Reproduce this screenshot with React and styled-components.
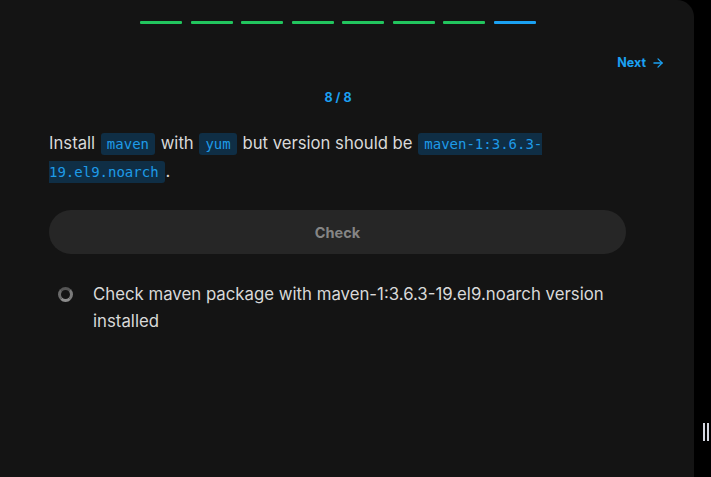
import React from "react"
import styled, { createGlobalStyle } from "styled-components"

const GlobalStyle = createGlobalStyle`
  html, body {
    margin: 0;
    padding: 0;
    background: #000;
    height: 100%;
  }
  body {
    font-family: Inter, "Noto Sans", sans-serif;
    -webkit-font-smoothing: antialiased;
  }
`

const steps = ["done", "done", "done", "done", "done", "done", "done", "current"]

const ArrowRight = () => (
  <svg width="14" height="14" viewBox="0 0 24 24" fill="none" stroke="currentColor" strokeWidth="2.2" strokeLinecap="round" strokeLinejoin="round">
    <path d="M5 12h14" />
    <path d="m12 5 7 7-7 7" />
  </svg>
)

const App = () => {
  return (
    <>
      <GlobalStyle />
      <Page>
        <Panel>
          <Progress>
            {steps.map((s, i) => (
              <Segment key={i} $state={s} />
            ))}
          </Progress>
          <NavRow>
            <NextButton>
              Next <ArrowRight />
            </NextButton>
          </NavRow>
          <Counter>8 / 8</Counter>
          <Content>
            <Task>
              Install <Code>maven</Code> with <Code>yum</Code> but version should be{" "}
              <Code>maven-1:3.6.3-19.el9.noarch</Code>.
            </Task>
            <CheckButton>Check</CheckButton>
            <CheckList>
              <CheckItem>
                <Spinner />
                <span>Check maven package with maven-1:3.6.3-19.el9.noarch version installed</span>
              </CheckItem>
            </CheckList>
          </Content>
        </Panel>
        <Handle />
      </Page>
    </>
  )
}

const Page = styled.div`
  display: flex;
  width: 711px;
  height: 477px;
  background: #000;
  overflow: hidden;
  position: relative;
`

const Panel = styled.div`
  width: 694px;
  height: 100%;
  background: #141414;
  border-top-right-radius: 17px;
  box-sizing: border-box;
  display: flex;
  flex-direction: column;
  padding-top: 21px;
`

const Progress = styled.div`
  display: flex;
  justify-content: center;
  gap: 8.6px;
  margin-left: -18px;
`

const Segment = styled.div`
  width: 42px;
  height: 3px;
  border-radius: 1px;
  background: ${p => (p.$state === "current" ? "#1ba1f2" : "#22c55e")};
`

const NavRow = styled.div`
  display: flex;
  justify-content: flex-end;
  padding-right: 29px;
  margin-top: 30px;
`

const NextButton = styled.div`
  display: flex;
  align-items: center;
  gap: 5px;
  color: #1ba1f2;
  font-size: 12.5px;
  font-weight: 700;
  line-height: 18px;
`

const Counter = styled.div`
  text-align: center;
  color: #1ba1f2;
  font-size: 12.5px;
  font-weight: 700;
  margin-top: 17px;
  margin-left: -18px;
  line-height: 18px;
`

const Content = styled.div`
  padding: 0 68px 0 49px;
  margin-top: 23px;
`

const Task = styled.p`
  margin: 0;
  color: #d9d9d9;
  font-size: 16.7px;
  line-height: 27px;
`

const Code = styled.code`
  font-family: "DejaVu Sans Mono", "Liberation Mono", monospace;
  font-size: 14px;
  color: #1e9be8;
  background: #0f2e45;
  border-radius: 3px;
  padding: 3px 6px;
  margin: 0 1px;
`

const CheckButton = styled.button`
  display: block;
  width: 100%;
  height: 44px;
  margin-top: 24px;
  border: none;
  border-radius: 22px;
  background: #262626;
  color: #858585;
  font-family: Inter, "Noto Sans", sans-serif;
  font-size: 14.5px;
  font-weight: 700;
`

const CheckList = styled.div`
  margin-top: 27px;
  padding-left: 9px;
`

const CheckItem = styled.div`
  display: flex;
  align-items: flex-start;
  gap: 20px;
  color: #d9d9d9;
  font-size: 16.8px;
  line-height: 27px;
`

const Spinner = styled.div`
  flex: none;
  width: 9px;
  height: 9px;
  margin-top: 6px;
  border-radius: 50%;
  border: 3px solid #8c8c8c;
  border-top-color: #555;
  border-left-color: #6a6a6a;
  border-right-color: #7a7a7a;
`

const Handle = styled.div`
  position: absolute;
  left: 703px;
  top: 423px;
  width: 6px;
  height: 18px;
  border-left: 2px solid #d4d6e0;
  border-right: 2px solid #d4d6e0;
  box-sizing: border-box;
`

export default App
